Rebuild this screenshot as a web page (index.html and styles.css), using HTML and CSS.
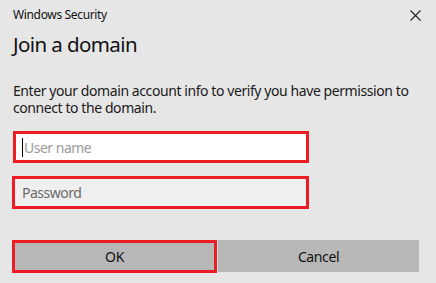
FILE: index.html
```html
<!DOCTYPE html>
<html>
<head>
<meta charset="utf-8">
<link rel="stylesheet" href="styles.css">
</head>
<body>
<div class="dialog">
  <div class="titlebar">
    <span class="app">Windows Security</span>
    <svg class="close" width="11" height="11" viewBox="0 0 11 11"><path d="M0.5 0.5 L10.5 10.5 M10.5 0.5 L0.5 10.5" stroke="#222" stroke-width="1.1" fill="none"/></svg>
  </div>
  <h1 class="heading">Join a domain</h1>
  <p class="desc">Enter your domain account info to verify you have permission to connect to the domain.</p>
  <div class="field field-user"><span class="caret"></span><span class="ph ph-user">User name</span></div>
  <div class="field field-pass"><span class="ph ph-pass">Password</span></div>
  <div class="buttons">
    <div class="btn btn-ok">OK</div>
    <div class="btn btn-cancel">Cancel</div>
  </div>
</div>
</body>
</html>
```

FILE: styles.css
```css
html, body {
  margin: 0;
  padding: 0;
  background: #e6e6e6;
}
body {
  font-family: "Noto Sans", "Open Sans", sans-serif;
  color: #1a1a1a;
  width: 436px;
  height: 283px;
  overflow: hidden;
}
.dialog {
  display: flex;
  flex-direction: column;
  padding: 0 17px 0 12px;
}
.titlebar {
  display: flex;
  justify-content: space-between;
  align-items: flex-start;
  height: 31px;
  padding-left: 1px;
}
.app {
  font-size: 12px;
  line-height: 16px;
  padding-top: 7px;
  letter-spacing: -0.35px;
  color: #111;
}
.close {
  margin-top: 10px;
  margin-right: -2px;
}
.heading {
  margin: -1px 0 0;
  padding-left: 1px;
  font-weight: normal;
  font-size: 20.5px;
  line-height: 28px;
  letter-spacing: -0.6px;
  color: #111;
}
.desc {
  margin: 24px 0 0;
  padding-left: 1px;
  font-size: 14px;
  line-height: 17px;
  letter-spacing: -0.42px;
  color: #1a1a1a;
}
.field {
  display: flex;
  align-items: center;
  box-sizing: border-box;
  border: 3px solid #ed1c24;
}
.field-user {
  margin: 15px 0 0 1px;
  width: 296px;
  height: 32px;
  background: #ffffff;
  padding-left: 6px;
}
.caret {
  width: 1px;
  height: 19px;
  background: #000;
  margin-right: 1px;
}
.ph {
  font-size: 14px;
  letter-spacing: -0.5px;
}
.ph-user {
  color: #9a9a9a;
}
.field-pass {
  margin-top: 13px;
  width: 297px;
  height: 33px;
  background: #efefef;
  padding-left: 7px;
}
.ph-pass {
  color: #6a6a6a;
}
.buttons {
  display: flex;
  gap: 1px;
  margin-top: 31px;
}
.btn {
  box-sizing: border-box;
  height: 32px;
  display: flex;
  align-items: center;
  justify-content: center;
  background: #b7b7b7;
  font-size: 14px;
  letter-spacing: -0.4px;
  color: #111;
}
.btn-ok {
  width: 205px;
  height: 33px;
  border: 3px solid #ed1c24;
}
.btn-cancel {
  width: 201px;
}
```
